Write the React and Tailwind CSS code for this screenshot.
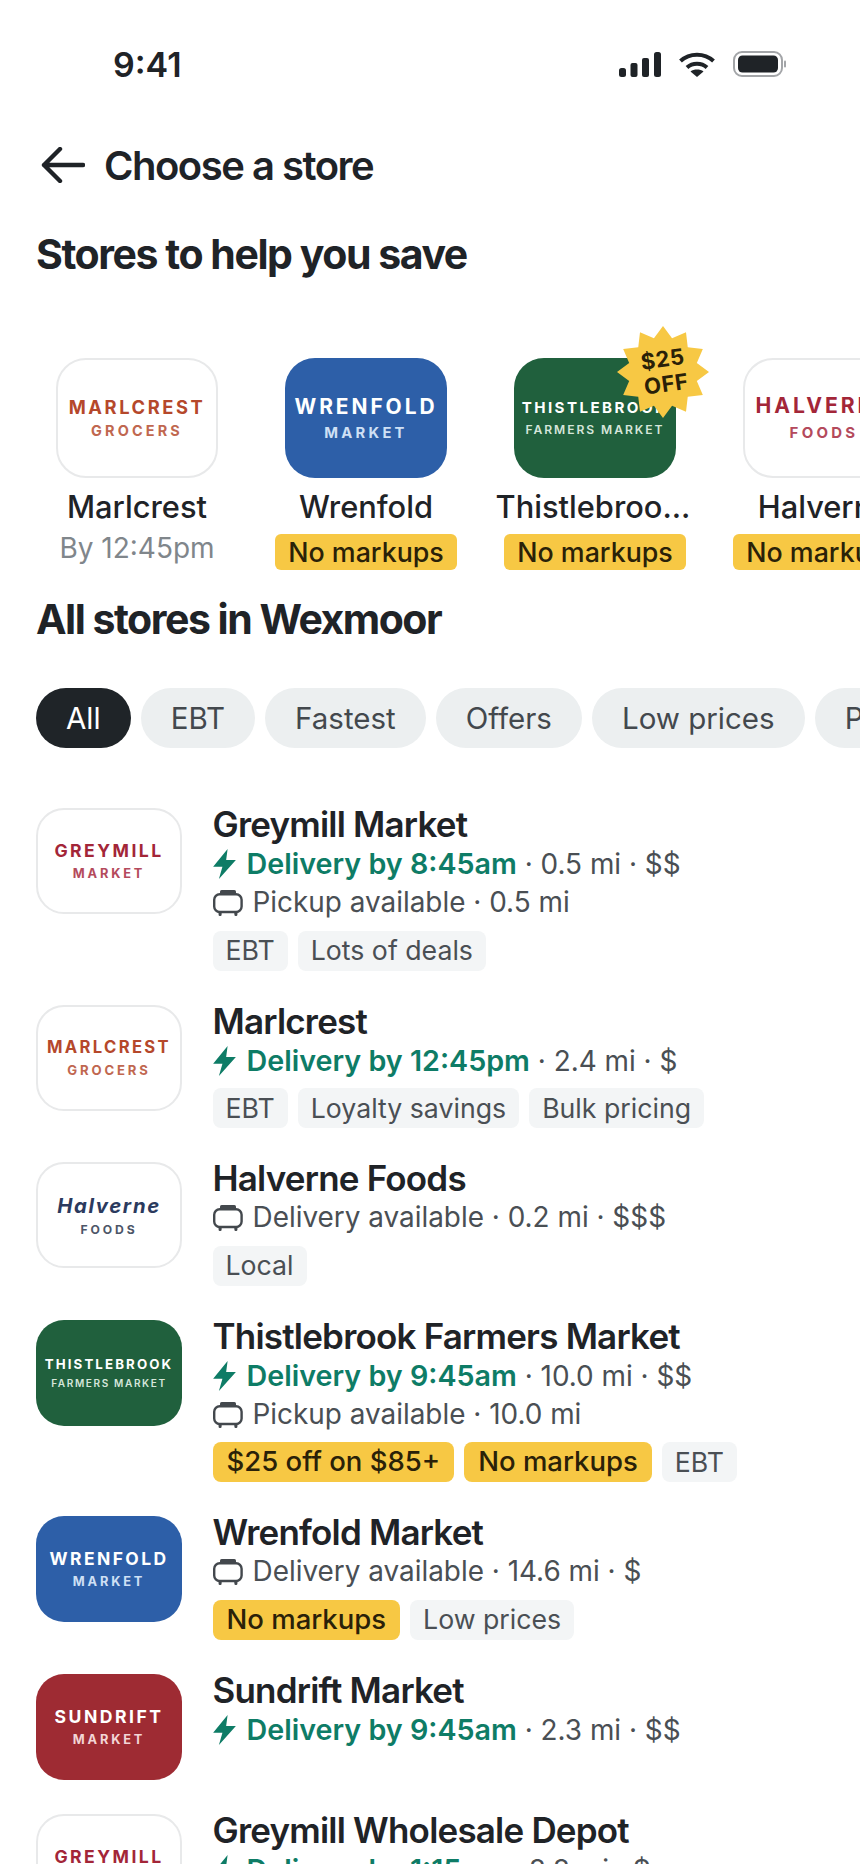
const logos = {
  greymill: { title: "GREYMILL", sub: "MARKET", bg: "bg-white border-2 border-[#e8e9ea]", titleCls: "text-[#a32638] text-[1.1em] tracking-[0.14em]", subCls: "text-[#b44a5c] text-[0.8em] tracking-[0.22em]" },
  marlcrest: { title: "MARLCREST", sub: "GROCERS", bg: "bg-white border-2 border-[#e8e9ea]", titleCls: "text-[#b5482b] text-[1.04em] tracking-[0.14em]", subCls: "text-[#c0674f] text-[0.82em] tracking-[0.22em]" },
  halverne: { title: "Halverne", sub: "FOODS", bg: "bg-white border-2 border-[#e8e9ea]", titleCls: "text-[#2b3a5e] text-[1.27em] italic tracking-[0.08em]", subCls: "text-[#4d5668] text-[0.76em] tracking-[0.24em]" },
  halverneCard: { title: "HALVERNE", sub: "FOODS", bg: "bg-white border-2 border-[#e8e9ea]", titleCls: "text-[#a32638] text-[1.2em] tracking-[0.14em]", subCls: "text-[#b44a5c] text-[0.85em] tracking-[0.22em]" },
  thistlebrook: { title: "THISTLEBROOK", sub: "FARMERS MARKET", bg: "bg-[#20603d]", titleCls: "text-white text-[0.83em] tracking-[0.16em]", subCls: "text-[#d5e6da] text-[0.63em] tracking-[0.16em] font-semibold" },
  thistlebrookCard: { title: "THISTLEBROOK", sub: "FARMERS MARKET", bg: "bg-[#20603d]", titleCls: "text-white text-[0.86em] tracking-[0.16em]", subCls: "text-[#d5e6da] text-[0.69em] tracking-[0.16em] font-semibold" },
  wrenfold: { title: "WRENFOLD", sub: "MARKET", bg: "bg-[#2d5fa8]", titleCls: "text-white text-[1.09em] tracking-[0.14em]", subCls: "text-[#cfe0f5] text-[0.8em] tracking-[0.22em]" },
  wrenfoldCard: { title: "WRENFOLD", sub: "MARKET", bg: "bg-[#2d5fa8]", titleCls: "text-white text-[1.19em] tracking-[0.14em]", subCls: "text-[#cfe0f5] text-[0.84em] tracking-[0.22em]" },
  sundrift: { title: "SUNDRIFT", sub: "MARKET", bg: "bg-[#9e2b33]", titleCls: "text-white text-[1.1em] tracking-[0.14em]", subCls: "text-[#f3d5d6] text-[0.8em] tracking-[0.22em]" },
};

const carousel = [
  { logo: "marlcrest", name: "Marlcrest", eta: "By 12:45pm" },
  { logo: "wrenfoldCard", name: "Wrenfold", badge: true },
  { logo: "thistlebrookCard", name: "Thistlebroo...", nameCls: "pr-[4px]", badge: true, star: true },
  { logo: "halverneCard", name: "Halverne", badge: true },
];

const filters = ["All", "EBT", "Fastest", "Offers", "Low prices", "Pickup"];

const stores = [
  { logo: "greymill", name: "Greymill Market", fast: "Delivery by 8:45am", fastMeta: " · 0.5 mi · $$", other: "Pickup available · 0.5 mi", tags: ["EBT", "Lots of deals"] },
  { logo: "marlcrest", name: "Marlcrest", fast: "Delivery by 12:45pm", fastMeta: " · 2.4 mi · $", tags: ["EBT", "Loyalty savings", "Bulk pricing"] },
  { logo: "halverne", name: "Halverne Foods", other: "Delivery available · 0.2 mi · $$$", tags: ["Local"] },
  { logo: "thistlebrook", name: "Thistlebrook Farmers Market", fast: "Delivery by 9:45am", fastMeta: " · 10.0 mi · $$", other: "Pickup available · 10.0 mi", promos: ["$25 off on $85+", "No markups"], tags: ["EBT"] },
  { logo: "wrenfold", name: "Wrenfold Market", other: "Delivery available · 14.6 mi · $", promos: ["No markups"], tags: ["Low prices"] },
  { logo: "sundrift", name: "Sundrift Market", fast: "Delivery by 9:45am", fastMeta: " · 2.3 mi · $$" },
  { logo: "greymill", name: "Greymill Wholesale Depot", fast: "Delivery by 1:15pm", fastMeta: " · 8.8 mi · $" },
];

function Logo({ id, big }) {
  const l = logos[id];
  return (
    <div className={`${l.bg} flex flex-col items-center justify-center overflow-hidden font-bold leading-tight shrink-0 ${big ? "w-[162px] h-[120px] rounded-[30px] text-[17.6px] gap-[4px]" : "w-[146px] h-[106px] rounded-[28px] text-[16px] gap-[4px]"}`}>
      <span className={`${l.titleCls} whitespace-nowrap`}>{l.title}</span>
      <span className={`${l.subCls} whitespace-nowrap`}>{l.sub}</span>
    </div>
  );
}

function Bolt() {
  return (
    <svg width="23" height="30" viewBox="0 0 22 29" className="shrink-0 fill-[#0e7c66]">
      <path d="M14 0 0 17.2h9L5.6 29 22 10.6h-9.4z" />
    </svg>
  );
}

function Tote() {
  return (
    <svg width="30" height="26" viewBox="0 0 30 26" fill="none" className="shrink-0">
      <rect x="1.2" y="4.2" width="27.4" height="17.8" rx="5.5" stroke="#43484d" strokeWidth="2.4" />
      <rect x="7" y="0" width="16" height="5" rx="1.6" fill="#43484d" />
      <rect x="5.6" y="22" width="3" height="4" rx="1.2" fill="#43484d" />
      <rect x="21.4" y="22" width="3" height="4" rx="1.2" fill="#43484d" />
    </svg>
  );
}

function Star() {
  const pts = [];
  for (let i = 0; i < 24; i++) {
    const r = i % 2 === 0 ? 46 : 35;
    const a = (i * Math.PI) / 12 - Math.PI / 2;
    pts.push(`${46 + r * Math.cos(a)},${46 + r * Math.sin(a)}`);
  }
  return (
    <div className="absolute -top-[32px] -right-[33px] w-[92px] h-[92px]">
      <svg width="92" height="92" viewBox="0 0 92 92" className="absolute inset-0 fill-[#f7c844]">
        <polygon points={pts.join(" ")} />
      </svg>
      <div className="absolute inset-0 pl-[3px] flex flex-col items-center justify-center -rotate-[8deg] text-[22px] leading-[25px] tracking-[0.5px] font-bold text-[#2a2108]">
        <span>$25</span>
        <span>OFF</span>
      </div>
    </div>
  );
}

function Promo({ children }) {
  return <span className="inline-flex items-center h-[36px] px-[13px] rounded-[6px] bg-[#f7c844] text-[26.8px] font-medium text-[#2a2108] whitespace-nowrap">{children}</span>;
}

function Tag({ children, promo }) {
  return (
    <span className={`inline-flex items-center h-[40px] rounded-[8px] whitespace-nowrap ${promo ? "px-[14px] bg-[#f7c844] text-[27.5px] font-medium text-[#2a2108]" : "px-[13px] bg-[#f3f5f6] text-[26.7px] text-[#4a4f54]"}`}>
      {children}
    </span>
  );
}

function StoreRow({ s }) {
  const hasTags = s.tags || s.promos;
  return (
    <div className="flex gap-[30.5px] min-h-[106px]">
      <Logo id={s.logo} />
      <div className="min-w-0">
        <div className="text-[35px] leading-[32px] mb-[4.5px] font-semibold tracking-[-0.8px] text-[#1f2327] whitespace-nowrap">{s.name}</div>
        {s.fast && (
          <div className="flex items-center gap-[11px] h-[39px] text-[27.9px] whitespace-nowrap">
            <Bolt />
            <span className="text-[#4a4f54]">
              <span className="font-semibold text-[28.7px] text-[#0e7c66]">{s.fast}</span>
              {s.fastMeta}
            </span>
          </div>
        )}
        {s.other && (
          <div className="flex items-center gap-[10px] h-[39px] text-[27.9px] text-[#4a4f54] whitespace-nowrap">
            <Tote />
            <span>{s.other}</span>
          </div>
        )}
        {hasTags && (
          <div className="flex gap-[10px] mt-[8px]">
            {(s.promos || []).map((t) => <Tag key={t} promo>{t}</Tag>)}
            {(s.tags || []).map((t) => <Tag key={t}>{t}</Tag>)}
          </div>
        )}
      </div>
    </div>
  );
}

export default function App() {
  return (
    <div className="w-[860px] h-[1864px] overflow-hidden bg-white font-['Inter',sans-serif] text-[#1f2327]">
      <div className="flex items-center justify-between h-[130px] pl-[113px] pr-[74px] pb-[2px]">
        <span className="text-[34px] font-semibold">9:41</span>
        <div className="flex items-center gap-[18px]">
          <svg width="42" height="25" viewBox="0 0 42 25" className="fill-[#1f2327]">
            <rect x="0" y="16" width="7" height="9" rx="2.5" />
            <rect x="11.5" y="11" width="7" height="14" rx="2" />
            <rect x="23" y="6" width="7" height="19" rx="2" />
            <rect x="35" y="0" width="7" height="25" rx="2.5" />
          </svg>
          <svg width="36" height="25" viewBox="0 0 36 25" fill="none" stroke="#1f2327" strokeWidth="4">
            <path d="M1.5 9C10.5 0.5 25.5 0.5 34.5 9" />
            <path d="M8 15.5c5.5-5 14.5-5 20 0" />
            <path d="M18 25l-6.5-5.5c3.5-2.6 9.5-2.6 13 0z" fill="#1f2327" stroke="none" />
          </svg>
          <svg width="53" height="26" viewBox="0 0 53 26" fill="none">
            <rect x="1" y="1" width="48" height="24" rx="8" stroke="#a3a5a8" strokeWidth="2" />
            <rect x="5" y="4.5" width="40" height="17" rx="4.5" fill="#1f2327" />
            <rect x="51" y="9.5" width="2" height="7" rx="1" fill="#a3a5a8" />
          </svg>
        </div>
      </div>

      <div className="flex items-center gap-[19px] pl-[41px] h-[70px]">
        <svg width="44" height="36" viewBox="0 0 44 36" fill="none" stroke="#1f2327" strokeWidth="4.4" strokeLinecap="round" strokeLinejoin="round" className="shrink-0">
          <path d="M42 18H3M19 2 3 18l16 16" />
        </svg>
        <h1 className="mt-[2px] text-[40px] font-semibold tracking-[-1.5px]">Choose a store</h1>
      </div>

      <h2 className="pl-[36px] mt-[29px] text-[41px] leading-[50px] font-bold tracking-[-1.45px]">Stores to help you save</h2>

      <div className="flex gap-[29px] pl-[37px] mt-[79px]">
        {carousel.map((c) => (
          <div key={c.name} className="w-[200px] shrink-0 flex flex-col items-center">
            <div className="relative">
              <Logo id={c.logo} big />
              {c.star && <Star />}
            </div>
            <div className={`w-full mt-[11px] text-center text-[30.8px] leading-[36px] font-medium whitespace-nowrap ${c.nameCls || ""}`}>{c.name}</div>
            {c.eta && <div className="mt-[5px] text-[28px] leading-[36px] text-[#80868b]">{c.eta}</div>}
            {c.badge && <div className="mt-[9px] flex"><Promo>No markups</Promo></div>}
          </div>
        ))}
      </div>

      <h2 className="pl-[36px] mt-[24px] text-[41px] leading-[50px] font-bold tracking-[-1.5px]">All stores in Wexmoor</h2>

      <div className="flex gap-[10px] pl-[36px] mt-[44px]">
        {filters.map((f, i) => (
          <span key={f} className={`shrink-0 flex items-center h-[60px] px-[30px] rounded-full text-[29.5px] ${i === 0 ? "bg-[#1f2428] text-white" : "bg-[#eceff0] text-[#43484d]"}`}>
            {f}
          </span>
        ))}
      </div>

      <div className="flex flex-col gap-[34px] pl-[36px] mt-[60px]">
        {stores.map((s) => <StoreRow key={s.name} s={s} />)}
      </div>
    </div>
  );
}
